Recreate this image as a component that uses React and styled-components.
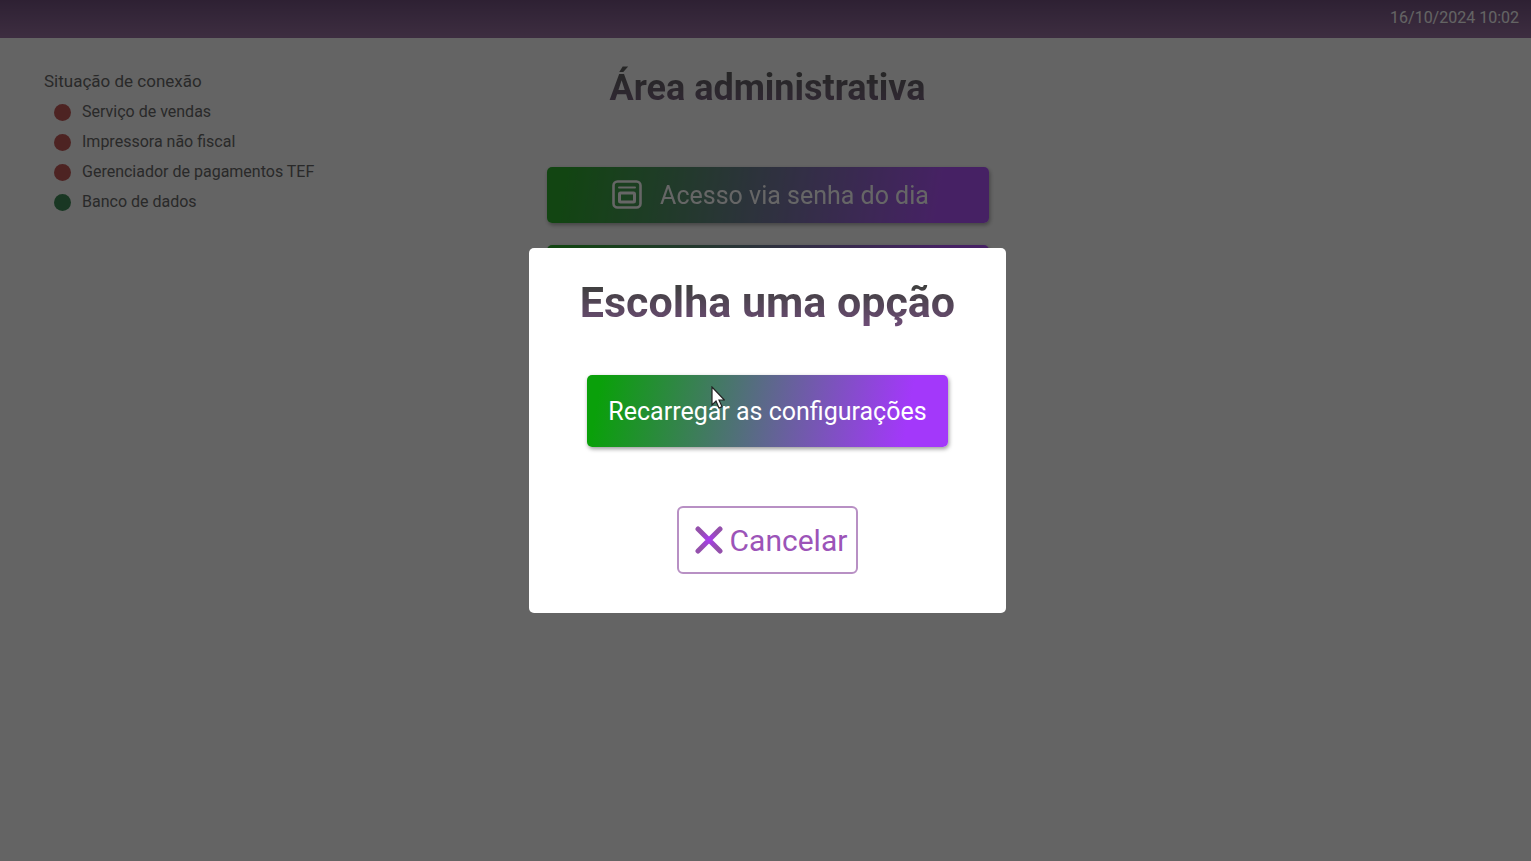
import React, { useState } from "react";
import styled, { createGlobalStyle } from "styled-components";

const GlobalStyle = createGlobalStyle`
  * {
    box-sizing: border-box;
  }

  body {
    margin: 0;
    background-color: #fafafa;
    font-family: Roboto, "Liberation Sans", sans-serif;
  }
`;

const Page = styled.div`
  min-height: 100vh;
`;

const Header = styled.header`
  display: flex;
  justify-content: flex-end;
  height: 38px;
  padding: 8px 12px;
  background: linear-gradient(#735280, #9a72a2);
  color: #fafafa;
  font-size: 16px;
  line-height: 20px;
`;

const Content = styled.main`
  display: grid;
  grid-template-columns: 1fr 442px 1fr;
  align-items: start;
  padding: 25px 40px 0 44px;
`;

const Status = styled.section`
  padding-top: 3px;
  color: #686868;
`;

const StatusTitle = styled.h2`
  margin: 0;
  font-size: 17px;
  font-weight: 400;
  line-height: 30px;
`;

const StatusList = styled.ul`
  margin: 0;
  padding: 1px 0 0 10px;
  list-style: none;
`;

const StatusItem = styled.li`
  display: flex;
  align-items: center;
  gap: 11px;
  font-size: 16px;
  line-height: 30px;
`;

const Dot = styled.span`
  width: 17px;
  height: 17px;
  border-radius: 50%;
  background-color: ${(props) => (props.$online ? "#408a58" : "#c05856")};
`;

const Panel = styled.section`
  display: flex;
  flex-direction: column;
  gap: 22px;
`;

const Title = styled.h1`
  margin: 0 0 32px;
  background: linear-gradient(#606060 20%, #80648a);
  background-clip: text;
  color: transparent;
  font-size: 36px;
  font-weight: 700;
  line-height: 50px;
  text-align: center;
`;

const ActionButton = styled.button`
  display: flex;
  align-items: center;
  justify-content: center;
  gap: 18px;
  height: 56px;
  padding: 0 20px 0 26px;
  border: none;
  border-radius: 5px;
  background: linear-gradient(100deg, #0aa00a 4%, #a338fa 88%);
  box-shadow: 1px 2px 4px rgba(0, 0, 0, 0.4);
  color: #ffffff;
  font-family: inherit;
  font-size: 25px;
  opacity: 0.85;
`;

const ReloadButton = styled(ActionButton)`
  position: relative;
  height: 72px;
  padding: 0 21px;
  opacity: 1;
`;

const Overlay = styled.div`
  position: fixed;
  inset: 0;
  display: flex;
  align-items: center;
  justify-content: center;
  padding-left: 4px;
  background-color: rgba(0, 0, 0, 0.6);
`;

const Modal = styled.div`
  display: flex;
  flex-direction: column;
  align-items: center;
  padding: 29px 51px 39px;
  border-radius: 5px;
  background-color: #ffffff;
`;

const ModalTitle = styled(Title)`
  margin: 0 0 48px;
  background-image: linear-gradient(#404040 20%, #6f4d78);
  font-size: 43px;
`;

const CancelButton = styled.button`
  display: flex;
  align-items: center;
  gap: 7px;
  height: 68px;
  margin-top: 59px;
  padding: 0 9px 0 16px;
  border: 2px solid #b890c4;
  border-radius: 6px;
  background-color: #ffffff;
  color: #9c54b8;
  font-family: inherit;
  font-size: 30px;
`;

const Pointer = styled.svg`
  position: absolute;
  top: 11px;
  left: 124px;
`;

const PasswordIcon = () => (
  <svg width="30" height="30" viewBox="0 0 30 30" fill="none" stroke="#ffffff" aria-hidden="true">
    <rect x="1.5" y="1.500" width="27" height="26" rx="4" strokeWidth="2.6" />
    <path d="M7 7.500h16" strokeWidth="2" strokeLinecap="round" />
    <rect x="7.500" y="13" width="15" height="9" rx="1" strokeWidth="3" />
  </svg>
);

const CloseIcon = () => (
  <svg width="28" height="28" viewBox="0 0 28 28" aria-hidden="true">
    <defs>
      <radialGradient id="closeColor">
        <stop offset="0" stopColor="#a83af0" />
        <stop offset="1" stopColor="#9450ac" />
      </radialGradient>
    </defs>
    <path d="M3 3l22 22M25 3L3 25" stroke="url(#closeColor)" strokeWidth="5" strokeLinecap="round" />
  </svg>
);

const services = [
  { name: "Serviço de vendas", online: false },
  { name: "Impressora não fiscal", online: false },
  { name: "Gerenciador de pagamentos TEF", online: false },
  { name: "Banco de dados", online: true },
];

const App = () => {
  const [open, setOpen] = useState(true);

  return (
    <Page>
      <GlobalStyle />
      <Header>
        <time dateTime="2024-10-16T10:02">16/10/2024 10:02</time>
      </Header>
      <Content>
        <Status>
          <StatusTitle>Situação de conexão</StatusTitle>
          <StatusList>
            {services.map((service) => (
              <StatusItem key={service.name}>
                <Dot $online={service.online} />
                {service.name}
              </StatusItem>
            ))}
          </StatusList>
        </Status>
        <Panel>
          <Title>Área administrativa</Title>
          <ActionButton type="button">
            <PasswordIcon />
            Acesso via senha do dia
          </ActionButton>
          <ActionButton type="button" aria-label="Opções" onClick={() => setOpen(true)} />
        </Panel>
      </Content>
      {open && (
        <Overlay>
          <Modal role="dialog" aria-modal="true" aria-labelledby="modal-title">
            <ModalTitle id="modal-title">Escolha uma opção</ModalTitle>
            <ReloadButton type="button">
              Recarregar as configurações
              <Pointer width="14" height="24" viewBox="0 0 14 24" aria-hidden="true">
                <path
                  d="M1 1v18l4-4 3 7 3-1.4-3-6.600h5.400z"
                  fill="#ffffff"
                  stroke="#222222"
                  strokeWidth="1.2"
                />
              </Pointer>
            </ReloadButton>
            <CancelButton type="button" onClick={() => setOpen(false)}>
              <CloseIcon />
              Cancelar
            </CancelButton>
          </Modal>
        </Overlay>
      )}
    </Page>
  );
};

export default App;
